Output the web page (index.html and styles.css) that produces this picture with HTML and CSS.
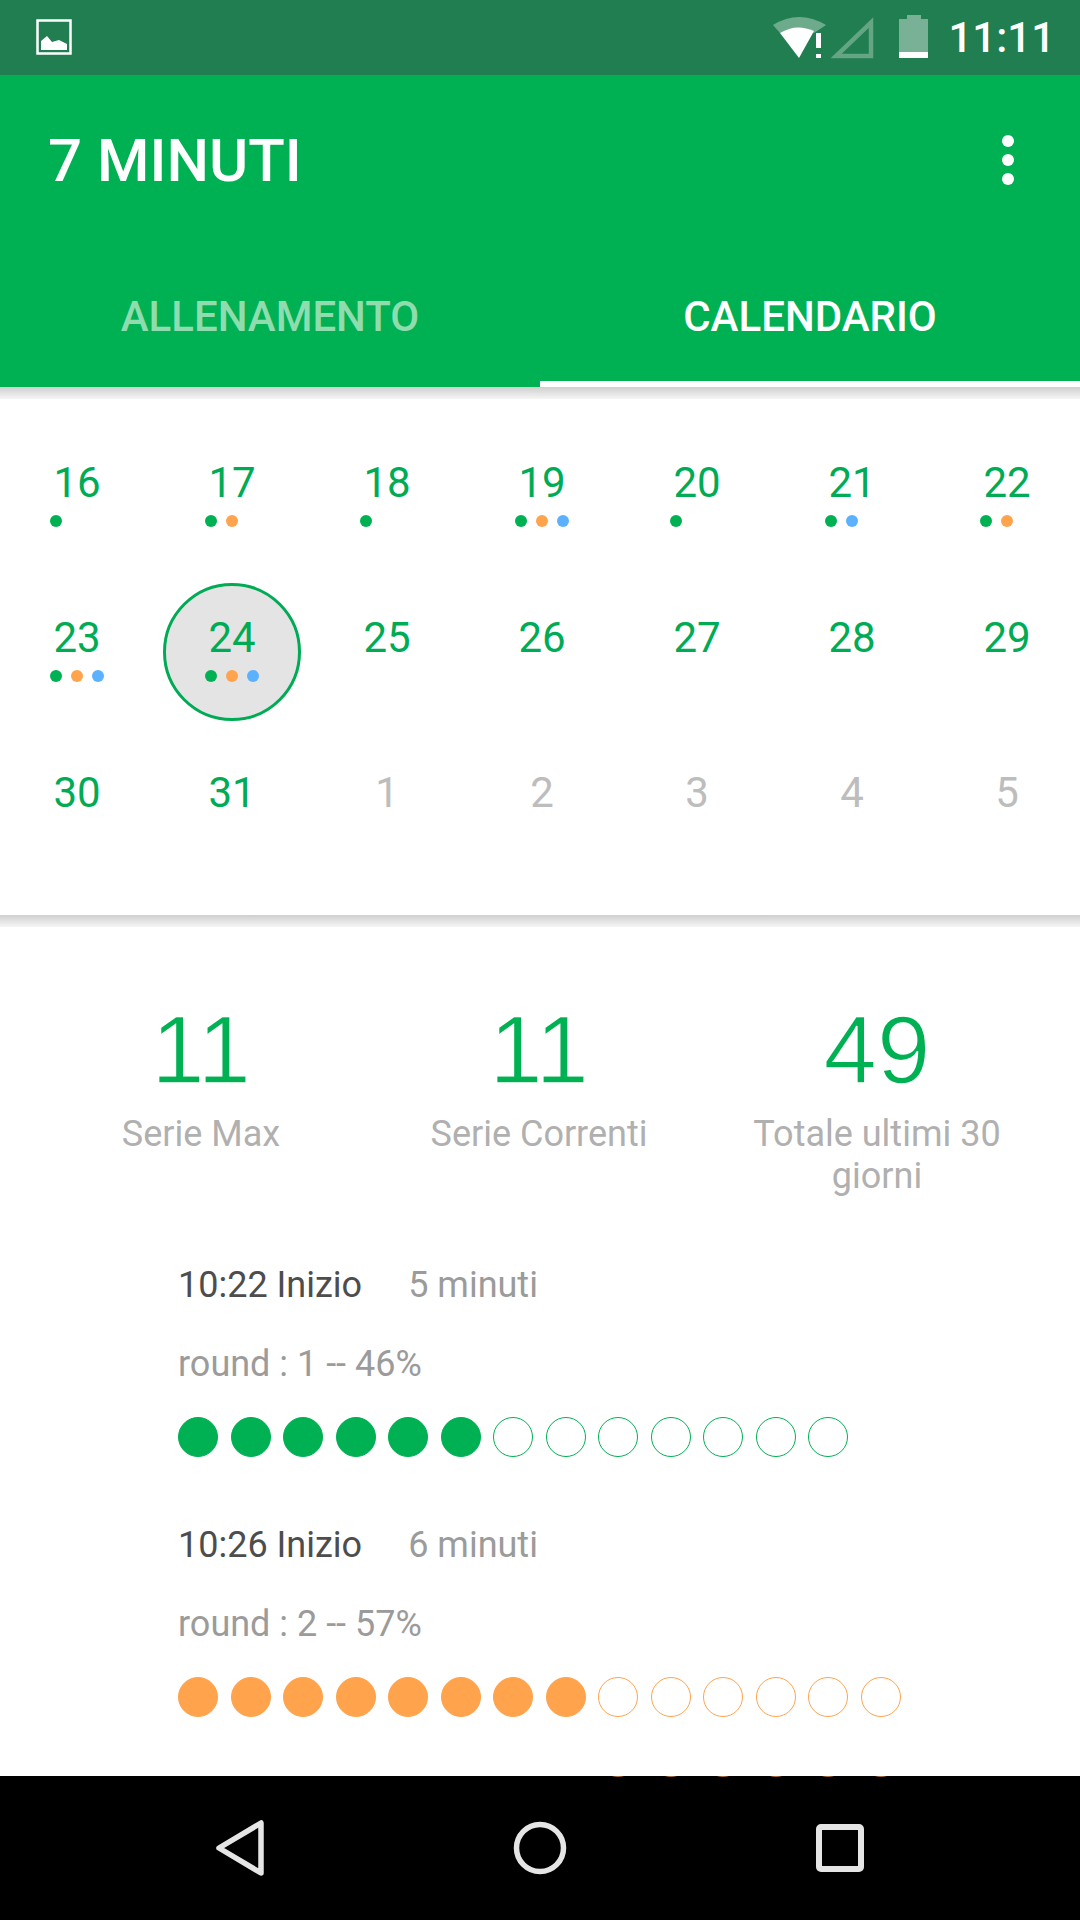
FILE: index.html
```html
<!DOCTYPE html>
<html lang="it">

<head>
    <meta charset="UTF-8">
    <meta name="viewport" content="width=device-width, initial-scale=1.0">
    <title>7 Minuti</title>
    <link rel="stylesheet" href="styles.css">
</head>

<body>
    <div class="phone">
        <div class="status">
            <svg class="status-pic" viewBox="0 0 36 36" width="36" height="36">
                <rect x="1.5" y="1.5" width="33" height="33" fill="none" stroke="#fff" stroke-width="2.5" />
                <path d="M5 31V22L11 17L16 23L23 21L31 25V31Z" fill="#fff" />
            </svg>
            <svg class="status-wifi" viewBox="0 0 56 75" width="56" height="75">
                <path d="M2 25Q28 9 55 25L43 33H9Z" fill="#fff" fill-opacity="0.35" />
                <path d="M9 33Q25 23 43 31L28 58Z" fill="#fff" />
                <rect x="45" y="33" width="5" height="15" fill="#fff" />
                <rect x="45" y="54" width="5" height="4" fill="#fff" />
            </svg>
            <svg class="status-signal" viewBox="0 0 44 75" width="44" height="75">
                <path d="M40 22.5V56H5Z" fill="none" stroke="#fff" stroke-opacity="0.3" stroke-width="4.5" />
            </svg>
            <svg class="status-battery" viewBox="0 0 29 75" width="29" height="75">
                <path d="M8 15H22V19H29V52H0V19H8Z" fill="#fff" fill-opacity="0.4" />
                <rect x="0" y="52" width="29" height="6" fill="#fff" />
            </svg>
            <span class="clock">11:11</span>
        </div>

        <header class="appbar">
            <div class="toolbar">
                <h1 class="title">7 MINUTI</h1>
                <div class="kebab"><span></span><span></span><span></span></div>
            </div>
            <div class="tabs">
                <div class="tab">ALLENAMENTO</div>
                <div class="tab tab-active">CALENDARIO</div>
            </div>
        </header>
        <div class="shadow"></div>

        <section class="calendar">
            <div class="month">
                <div class="day"><span class="num">16</span><div class="marks"><i class="g"></i></div></div>
                <div class="day"><span class="num">17</span><div class="marks"><i class="g"></i><i class="o"></i></div></div>
                <div class="day"><span class="num">18</span><div class="marks"><i class="g"></i></div></div>
                <div class="day"><span class="num">19</span><div class="marks"><i class="g"></i><i class="o"></i><i class="b"></i></div></div>
                <div class="day"><span class="num">20</span><div class="marks"><i class="g"></i></div></div>
                <div class="day"><span class="num">21</span><div class="marks"><i class="g"></i><i class="b"></i></div></div>
                <div class="day"><span class="num">22</span><div class="marks"><i class="g"></i><i class="o"></i></div></div>

                <div class="day"><span class="num">23</span><div class="marks"><i class="g"></i><i class="o"></i><i class="b"></i></div></div>
                <div class="day today"><span class="num">24</span><div class="marks"><i class="g"></i><i class="o"></i><i class="b"></i></div></div>
                <div class="day"><span class="num">25</span></div>
                <div class="day"><span class="num">26</span></div>
                <div class="day"><span class="num">27</span></div>
                <div class="day"><span class="num">28</span></div>
                <div class="day"><span class="num">29</span></div>

                <div class="day"><span class="num">30</span></div>
                <div class="day"><span class="num">31</span></div>
                <div class="day other"><span class="num">1</span></div>
                <div class="day other"><span class="num">2</span></div>
                <div class="day other"><span class="num">3</span></div>
                <div class="day other"><span class="num">4</span></div>
                <div class="day other"><span class="num">5</span></div>
            </div>
        </section>
        <div class="shadow"></div>

        <section class="stats">
            <div class="stat">
                <div class="stat-num">11</div>
                <div class="stat-label">Serie Max</div>
            </div>
            <div class="stat">
                <div class="stat-num">11</div>
                <div class="stat-label">Serie Correnti</div>
            </div>
            <div class="stat">
                <div class="stat-num">49</div>
                <div class="stat-label">Totale ultimi 30 giorni</div>
            </div>
        </section>

        <section class="sessions">
            <div class="session">
                <div class="session-head">
                    <span class="start">10:22 Inizio</span>
                    <span class="length">5 minuti</span>
                </div>
                <div class="round">round : 1 -- 46%</div>
                <div class="steps steps-green">
                    <i class="done"></i><i class="done"></i><i class="done"></i><i class="done"></i><i class="done"></i><i class="done"></i>
                    <i></i><i></i><i></i><i></i><i></i><i></i><i></i>
                </div>
            </div>
            <div class="session">
                <div class="session-head">
                    <span class="start">10:26 Inizio</span>
                    <span class="length">6 minuti</span>
                </div>
                <div class="round">round : 2 -- 57%</div>
                <div class="steps steps-orange">
                    <i class="done"></i><i class="done"></i><i class="done"></i><i class="done"></i><i class="done"></i><i class="done"></i><i class="done"></i><i class="done"></i>
                    <i></i><i></i><i></i><i></i><i></i><i></i>
                </div>
            </div>
        </section>

        <nav class="navbar">
            <div class="steps steps-orange peek">
                <i class="gap"></i><i class="gap"></i><i class="gap"></i><i class="gap"></i><i class="gap"></i><i class="gap"></i><i class="gap"></i><i class="gap"></i>
                <i></i><i></i><i></i><i></i><i></i><i></i>
            </div>
            <div class="nav-buttons">
                <svg viewBox="0 0 60 60" width="60" height="60">
                    <path d="M9 30L51 5V55Z" fill="none" stroke="#e5e5e5" stroke-width="5.5" stroke-linejoin="round" />
                </svg>
                <svg viewBox="0 0 60 60" width="60" height="60">
                    <circle cx="30" cy="30" r="23.5" fill="none" stroke="#e5e5e5" stroke-width="5.5" />
                </svg>
                <svg viewBox="0 0 60 60" width="60" height="60">
                    <rect x="9" y="9" width="42" height="42" rx="2" fill="none" stroke="#e5e5e5" stroke-width="6" />
                </svg>
            </div>
        </nav>
    </div>
</body>

</html>
```

FILE: styles.css
```css
* {
    box-sizing: border-box;
}

body {
    margin: 0;
    font-family: Roboto, "Liberation Sans", sans-serif;
    background-color: #fff;
}

.phone {
    display: flex;
    flex-direction: column;
    width: 1080px;
    height: 1920px;
    overflow: hidden;
}

/* status bar */
.status {
    display: flex;
    align-items: center;
    flex: none;
    height: 75px;
    padding: 0 25px 0 36px;
    background-color: #217e50;
}

.status-pic {
    margin-right: auto;
    margin-top: -1px;
}

.status-signal {
    margin-left: 4px;
}

.status-battery {
    margin-left: 24px;
}

.clock {
    margin-left: 20px;
    color: #fff;
    font-size: 42px;
    font-weight: 500;
}

/* app bar */
.appbar {
    flex: none;
    background-color: #00b153;
    color: #fff;
}

.toolbar {
    display: flex;
    justify-content: space-between;
    height: 168px;
    padding: 51px 66px 0 48px;
}

.title {
    margin: 0;
    font-size: 60px;
    line-height: 70px;
    font-weight: 500;
}

.kebab {
    display: flex;
    flex-direction: column;
    gap: 7px;
    padding-top: 9px;
}

.kebab span {
    width: 12px;
    height: 12px;
    border-radius: 50%;
    background-color: #fff;
}

.tabs {
    display: flex;
}

.tab {
    flex: 1;
    padding: 50px 0 41px;
    border-bottom: 6px solid transparent;
    font-size: 42px;
    line-height: 47px;
    font-weight: 500;
    text-align: center;
    color: #8fdcae;
}

.tab-active {
    border-bottom-color: #fff;
    color: #fff;
}

.shadow {
    flex: none;
    height: 12px;
    background: linear-gradient(#cfcfcf, #f6f6f6);
}

/* calendar */
.calendar {
    flex: none;
    height: 516px;
    padding-top: 21px;
}

.month {
    display: grid;
    grid-template-columns: repeat(7, 155px);
    grid-auto-rows: 155px;
    margin-left: -0.5px;
}

.day {
    position: relative;
    display: flex;
    flex-direction: column;
    align-items: center;
    isolation: isolate;
    padding-top: 38px;
    color: #00ab55;
}

.num {
    font-size: 42px;
    line-height: 49px;
}

.other {
    color: #bdbdbd;
}

.today::before {
    content: "";
    position: absolute;
    top: 8px;
    left: 8.5px;
    z-index: -1;
    box-sizing: border-box;
    width: 138px;
    height: 138px;
    border: 3.5px solid #00ab55;
    border-radius: 50%;
    background-color: #e4e4e4;
}

.marks {
    display: flex;
    gap: 9px;
    width: 54px;
    margin-top: 8px;
}

.marks i {
    width: 12px;
    height: 12px;
    border-radius: 50%;
}

.g {
    background-color: #00b153;
}

.o {
    background-color: #ffa34d;
}

.b {
    background-color: #5cb1ff;
}

/* totals */
.stats {
    display: flex;
    flex: none;
    padding: 67px 32px 0;
}

.stat {
    width: 338px;
    padding: 0 40px;
    text-align: center;
}

/* no light cut of this face installed, thin it with a white stroke */
.stat-num {
    font-family: "Liberation Sans", sans-serif;
    font-size: 96px;
    line-height: 112px;
    color: #00b153;
    -webkit-text-stroke: 1.5px #fff;
}

.stat-label {
    margin-top: 7px;
    font-size: 36px;
    line-height: 42px;
    color: #b0b0b0;
}

/* session list */
.sessions {
    flex: 1;
    padding: 67px 0 0 178px;
    min-height: 0;
}

.session {
    margin-bottom: 67px;
}

.session-head {
    display: flex;
    gap: 46px;
    font-size: 36px;
    line-height: 42px;
}

.start {
    color: #4d4d4d;
}

.length,
.round {
    color: #9b9b9b;
}

.round {
    margin-top: 37px;
    font-size: 36px;
    line-height: 42px;
}

.steps {
    display: flex;
    gap: 12.5px;
    margin-top: 32px;
}

.steps i {
    flex: none;
    width: 40px;
    height: 40px;
    border: 1.5px solid;
    border-radius: 50%;
}

.steps-green i {
    border-color: #00b153;
}

.steps-orange i {
    border-color: #ffa34d;
}

.steps-green .done {
    background-color: #00b153;
}

.steps-orange .done {
    background-color: #ffa34d;
}

/* nav bar */
.navbar {
    flex: none;
    height: 144px;
    overflow: hidden;
    background-color: #000;
}

.peek {
    height: 1px;
    margin-top: 0;
    padding-left: 178px;
    overflow: hidden;
    opacity: 0.7;
}

.steps .gap {
    border-color: transparent;
}

.nav-buttons {
    display: flex;
    justify-content: space-between;
    padding: 41px 210px 0;
}
```
